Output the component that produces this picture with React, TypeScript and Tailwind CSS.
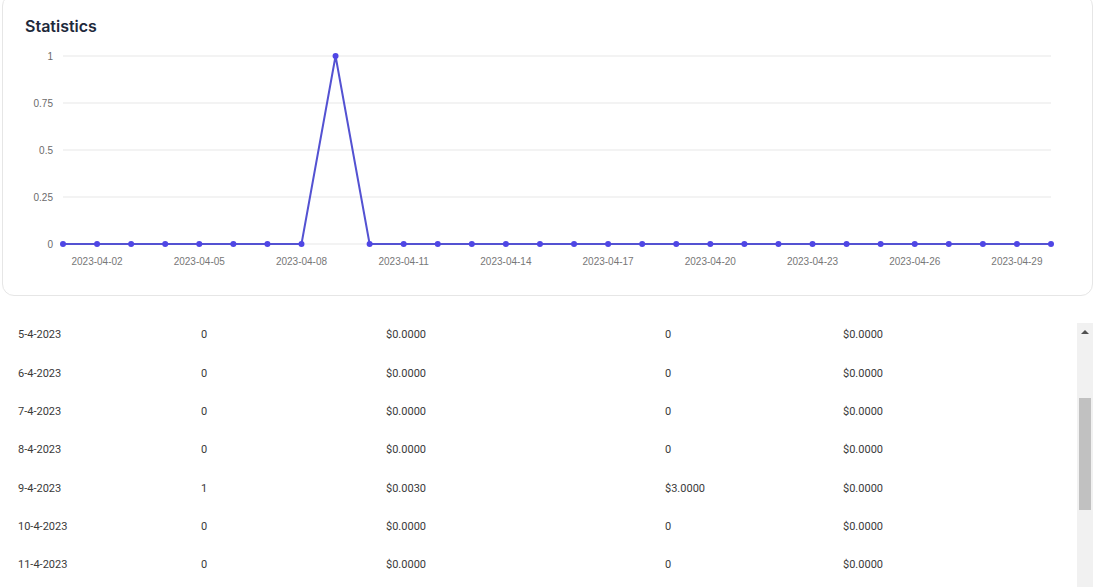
import React from 'react';

interface Row {
  date: string;
  clicks: string;
  cost: string;
  revenue: string;
  profit: string;
}

const days = Array.from({ length: 30 }, (_, i) => i + 1);
const values = days.map(d => (d === 9 ? 1 : 0));

const rows: Row[] = days.map(d => ({
  date: `${d}-4-2023`,
  clicks: d === 9 ? '1' : '0',
  cost: d === 9 ? '$0.0030' : '$0.0000',
  revenue: d === 9 ? '$3.0000' : '0',
  profit: '$0.0000',
}));

// chart geometry (svg coordinates)
const X0 = 60;
const X1 = 1048;
const Y_TOP = 18;
const Y_BOT = 206;
const step = (X1 - X0) / 29;
const px = (i: number) => X0 + i * step;
const py = (v: number) => Y_BOT - v * (Y_BOT - Y_TOP);

const LineChart: React.FC = () => {
  const ticks = [1, 0.75, 0.5, 0.25, 0];
  const points = values.map((v, i) => `${px(i)},${py(v)}`).join(' ');

  return (
    <svg width="1089" height="243" className="block" style={{ fontFamily: '"Liberation Sans", Arial, sans-serif' }}>
      {ticks.map(t => (
        <g key={t}>
          <line x1={X0} x2={X1} y1={py(t)} y2={py(t)} stroke="#e7e7e7" strokeWidth="1" />
          <text x={50} y={py(t) + 3.5} textAnchor="end" fontSize="10" fill="#6b6b6b">
            {t}
          </text>
        </g>
      ))}
      <polyline points={points} fill="none" stroke="#5452d2" strokeWidth="2" strokeLinejoin="round" />
      {values.map((v, i) => (
        <circle key={i} cx={px(i)} cy={py(v)} r="3" fill="#4f46e5" />
      ))}
      {days.map((d, i) =>
        i % 3 === 1 ? (
          <text key={d} x={px(i)} y={227} textAnchor="middle" fontSize="10" fill="#777777">
            {`2023-04-${String(d).padStart(2, '0')}`}
          </text>
        ) : null
      )}
    </svg>
  );
};

const App: React.FC = () => {
  return (
    <div className="h-[587px] overflow-hidden bg-white pl-[2px] pr-[22px]" style={{ fontFamily: 'Inter, "Noto Sans", sans-serif' }}>
      {/* Statistics card */}
      <div className="-mt-[6px] rounded-xl border border-[#e6e6e6] bg-white pt-[19px] pb-[14px]">
        <h2 className="px-[22px] text-[16px] leading-6 font-semibold text-[#1e293b]">Statistics</h2>
        <LineChart />
      </div>

      {/* Daily table */}
      <div className="mt-[27px] flex h-[300px]">
        <div className="flex-1 overflow-hidden">
          <div className="-mt-[160px] pl-4 text-[11px] text-[#3a3a3a]" style={{ fontFamily: 'Roboto, "Liberation Sans", sans-serif' }}>
            {rows.map(r => (
              <div key={r.date} className="grid h-[38.33px] grid-cols-[183px_185px_279px_178px_1fr] items-center">
                <span>{r.date}</span>
                <span>{r.clicks}</span>
                <span>{r.cost}</span>
                <span>{r.revenue}</span>
                <span>{r.profit}</span>
              </div>
            ))}
          </div>
        </div>

        {/* scrollbar */}
        <div className="flex w-4 flex-col bg-[#f1f1f1]">
          <div className="flex h-[17px] items-center justify-center">
            <div className="h-0 w-0 border-x-[4px] border-b-[4px] border-x-transparent border-b-[#505050]" />
          </div>
          <div className="mx-[2px] mt-[58px] h-[112px] bg-[#c1c1c1]" />
        </div>
      </div>
    </div>
  );
};

export default App;
